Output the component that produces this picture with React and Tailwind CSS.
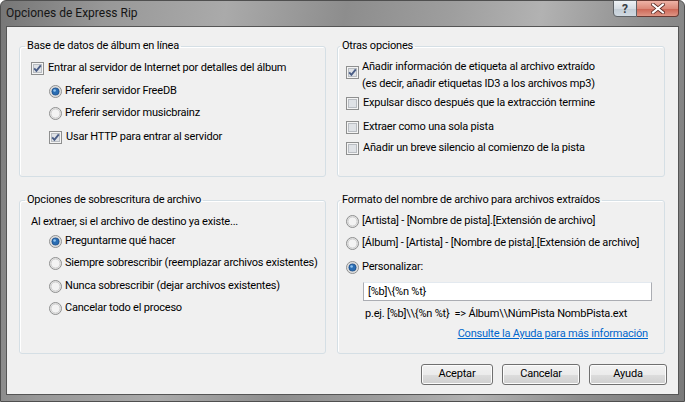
import React from "react";

function CheckBox({ checked }) {
  return (
    <svg width="13" height="13" viewBox="0 0 13 13" className="shrink-0">
      <rect x="0.5" y="0.5" width="12" height="12" fill="#f4f4f4" stroke="#8e8f8f" />
      <rect x="2.5" y="2.5" width="8" height="8" fill="#dfe2e6" stroke="#b9bdc2" />
      {checked && (
        <path d="M3.2 6.4 L5.4 8.8 L9.8 3.4" fill="none" stroke="#4a5d86" strokeWidth="1.9" />
      )}
    </svg>
  );
}

function Radio({ checked }) {
  return (
    <svg width="13" height="13" viewBox="0 0 13 13" className="shrink-0">
      <circle cx="6.5" cy="6.5" r="6" fill="#e6e6e6" stroke="#8e8f8f" />
      <circle cx="6.5" cy="6.5" r="4.5" fill="#f3f3f3" stroke="#cfcfcf" />
      {checked && (
        <>
          <circle cx="6.5" cy="6.5" r="3.6" fill="#2a6db3" stroke="#174a86" strokeWidth="0.8" />
          <circle cx="5.6" cy="5.5" r="1.3" fill="#8fc3ee" />
        </>
      )}
    </svg>
  );
}

function Check({ checked, className = "", children }) {
  return (
    <div className={"flex items-center gap-[4px] h-[16px] leading-[16px] " + className}>
      <CheckBox checked={checked} />
      <span className="whitespace-nowrap">{children}</span>
    </div>
  );
}

function Option({ checked, className = "", children }) {
  return (
    <div className={"flex items-center gap-[3px] h-[16px] leading-[16px] " + className}>
      <Radio checked={checked} />
      <span className="whitespace-nowrap">{children}</span>
    </div>
  );
}

function Button({ className = "", children }) {
  return (
    <button className={"h-[21px] rounded-[3px] border border-[#707070] bg-[linear-gradient(#f2f2f2_0%,#ebebeb_50%,#dddddd_50%,#cfcfcf_100%)] shadow-[inset_0_0_0_1px_#fcfcfc] text-[11px] text-black " + className}>
      {children}
    </button>
  );
}

const group =
  "min-w-0 border border-[#d5dfe5] rounded-[3px] shadow-[inset_1px_1px_0_#ffffff]";

export default function App() {
  return (
    <div className="w-[685px] h-[402px] flex flex-col rounded-t-[6px] border border-[#4f4f4f] bg-[linear-gradient(100deg,#767676_0%,#989898_14%,#aaaaaa_30%,#8d8d8d_46%,#9e9e9e_60%,#b2b2b2_72%,#8e8e8e_86%,#7a7a7a_100%)] font-[Roboto,sans-serif] text-[11px] text-black">
      {/* title bar */}
      <div className="h-[25px] flex justify-between">
        <div className="pl-[5px] pt-[4px] text-[12px] leading-[16px] text-[#151515]">
          Opciones de Express Rip
        </div>
        <div className="flex self-start mr-[5px] -mt-px">
          <div className="w-[24px] h-[17px] flex items-center justify-center rounded-bl-[4px] border border-[#5e6266] bg-[linear-gradient(#eef2f5_0%,#d6dde4_50%,#c2ccd5_51%,#d0d9e1_100%)] text-[12px] font-bold leading-none text-[#3a3f46]">
            ?
          </div>
          <div className="w-[42px] h-[17px] flex items-center justify-center rounded-br-[4px] border border-l-0 border-[#6a3a33] bg-[linear-gradient(#eeb3a6_0%,#dc8a7a_50%,#cc6453_51%,#de9585_100%)]">
            <svg width="14" height="11" viewBox="0 0 14 11">
              <path d="M2 1.5 L12 9.5 M12 1.5 L2 9.5" stroke="#5a2b25" strokeWidth="3.6" strokeLinecap="square" />
              <path d="M2 1.5 L12 9.5 M12 1.5 L2 9.5" stroke="#ffffff" strokeWidth="2" strokeLinecap="square" />
            </svg>
          </div>
        </div>
      </div>

      {/* client area */}
      <div className="flex-1 mx-[5px] mb-[6px] border border-[#555555] bg-[#f0f0f0] pl-[12px] pt-[11px] tracking-[-0.2px]">
        <div className="grid grid-cols-[307px_328px] gap-x-[11px] gap-y-[15px]">
          {/* top left */}
          <fieldset className={group + " h-[139px] pl-[7px]"}>
            <legend className="-ml-[2px] px-[2px] leading-[16px]">Base de datos de álbum en línea</legend>
            <Check checked className="mt-[6px] ml-[4px]">
              Entrar al servidor de Internet por detalles del álbum
            </Check>
            <Option checked className="mt-[7px] ml-[22px]">Preferir servidor FreeDB</Option>
            <Option className="mt-[6px] ml-[22px]">Preferir servidor musicbrainz</Option>
            <Check checked className="mt-[8px] ml-[22px]">Usar HTTP para entrar al servidor</Check>
          </fieldset>

          {/* top right */}
          <fieldset className={group + " h-[139px] pl-[8px]"}>
            <legend className="-ml-[6px] px-[2px] leading-[16px]">Otras opciones</legend>
            <div className="mt-[4px] flex items-start gap-[3px]">
              <div className="mt-[8px]">
                <CheckBox checked />
              </div>
              <div className="leading-[17px] whitespace-nowrap">
                Añadir información de etiqueta al archivo extraído
                <br />
                (es decir, añadir etiquetas ID3 a los archivos mp3)
              </div>
            </div>
            <Check className="mt-[3px] gap-[3px]">Expulsar disco después que la extracción termine</Check>
            <Check className="mt-[8px] gap-[3px]">Extraer como una sola pista</Check>
            <Check className="mt-[5px] gap-[3px]">Añadir un breve silencio al comienzo de la pista</Check>
          </fieldset>

          {/* bottom left */}
          <fieldset className={group + " h-[162px] pl-[7px]"}>
            <legend className="-ml-[2px] px-[2px] leading-[16px]">Opciones de sobrescritura de archivo</legend>
            <div className="mt-[6px] ml-[4px] leading-[16px]">Al extraer, si el archivo de destino ya existe...</div>
            <Option checked className="mt-[3px] ml-[22px]">Preguntarme qué hacer</Option>
            <Option className="mt-[6px] ml-[22px]">Siempre sobrescribir (reemplazar archivos existentes)</Option>
            <Option className="mt-[7px] ml-[22px]">Nunca sobrescribir (dejar archivos existentes)</Option>
            <Option className="mt-[6px] ml-[22px]">Cancelar todo el proceso</Option>
          </fieldset>

          {/* bottom right */}
          <fieldset className={group + " h-[162px] pl-[8px] pr-[16px]"}>
            <legend className="-ml-[6px] px-[2px] leading-[16px]">Formato del nombre de archivo para archivos extraídos</legend>
            <Option className="mt-[5px]">[Artista] - [Nombre de pista].[Extensión de archivo]</Option>
            <Option className="mt-[6px]">[Álbum] - [Artista] - [Nombre de pista].[Extensión de archivo]</Option>
            <Option checked className="mt-[8px]">Personalizar:</Option>
            <input
              readOnly
              value="[%b]\{%n %t}"
              className="mt-[7px] ml-[17px] w-[289px] h-[19px] border border-[#abadb3] border-t-[#e3e9ef] bg-white px-[4px] text-[11px] outline-none"
            />
            <div className="mt-[5px] ml-[19px] leading-[16px] whitespace-pre">
              {"p.ej. [%b]\\\\{%n %t}  => Álbum\\\\NúmPista NombPista.ext"}
            </div>
            <div className="mt-[4px] flex justify-end leading-[16px]">
              <a href="#" className="text-[#0066cc] underline">
                Consulte la Ayuda para más información
              </a>
            </div>
          </fieldset>
        </div>

        {/* buttons */}
        <div className="mt-[10px] flex justify-end gap-[9px] w-[648px]">
          <Button className="w-[72px]">Aceptar</Button>
          <Button className="w-[78px]">Cancelar</Button>
          <Button className="w-[78px]">Ayuda</Button>
        </div>
      </div>
    </div>
  );
}
